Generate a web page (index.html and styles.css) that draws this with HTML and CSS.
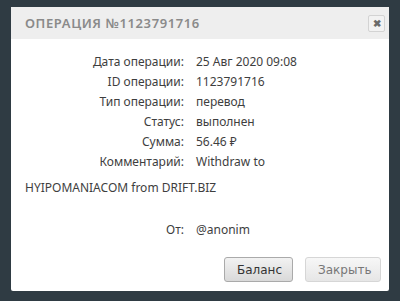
FILE: index.html
```html
<!DOCTYPE html>
<html lang="ru">
<head>
    <meta charset="UTF-8">
    <title>Операция</title>
    <link rel="stylesheet" href="styles.css">
</head>
<body>
    <div class="dialog">
        <div class="dialog-head">
            <span class="dialog-title">ОПЕРАЦИЯ №1123791716</span>
            <span class="dialog-close">&#10006;</span>
        </div>
        <div class="dialog-body">
            <div class="row"><span class="label">Дата операции:</span>25 Авг 2020 09:08</div>
            <div class="row"><span class="label">ID операции:</span>1123791716</div>
            <div class="row"><span class="label">Тип операции:</span>перевод</div>
            <div class="row"><span class="label">Статус:</span>выполнен</div>
            <div class="row"><span class="label">Сумма:</span>56.46 &#8381;</div>
            <div class="row comment"><span class="label">Комментарий:</span>Withdraw to</div>
            <div class="row comment-tail">HYIPOMANIACOM from DRIFT.BIZ</div>
            <div class="row from"><span class="label">От:</span>@anonim</div>
        </div>
        <div class="dialog-foot">
            <button class="btn btn-main">Баланс</button>
            <button class="btn btn-close">Закрыть</button>
        </div>
    </div>
</body>
</html>
```

FILE: styles.css
```css
*{margin: 0;padding: 0;box-sizing: border-box;}
body{background: #2f3b43;padding: 7px 11px;font-family: "Noto Sans", sans-serif;font-size: 12px;color: #3e3e3e;}
.dialog{width: 378px;height: 284px;background: #fff;border-radius: 2px;}
.dialog-head{height: 32px;background: #eeeeee;display: flex;align-items: center;justify-content: space-between;padding: 0 4px 0 14px;}
.dialog-title{font-family: "Noto Sans", sans-serif;font-weight: 600;font-size: 13px;letter-spacing: 0.6px;color: #8a8a8a;}
.dialog-close{width: 17px;height: 17px;border: 1px solid #d3d3d3;border-radius: 2px;background: #f2f2f2;color: #6a6a6a;font-size: 10px;font-weight: bold;display: flex;align-items: center;justify-content: center;}
.dialog-body{padding: 13px 14px 0 14px;}
.row{line-height: 20px;}
.label{display: inline-block;width: 159px;text-align: right;margin-right: 12px;}
.comment-tail{margin-top: 6px;}
.from{margin-top: 22px;}
.dialog-foot{display: flex;justify-content: flex-end;gap: 12px;padding: 17px 8px 0 0;}
.btn{height: 25px;padding: 0 12px;font-family: "DejaVu Sans", sans-serif;font-size: 12px;color: #777;border: 1px solid #d6d6d6;border-radius: 3px;background: linear-gradient(#f7f7f7, #e6e6e6);}
.btn-main{width: 69px;color: #333;border-color: #aaa;background: linear-gradient(#f2f2f2, #d9d9d9);}
.btn-close{width: 76px;}
```
